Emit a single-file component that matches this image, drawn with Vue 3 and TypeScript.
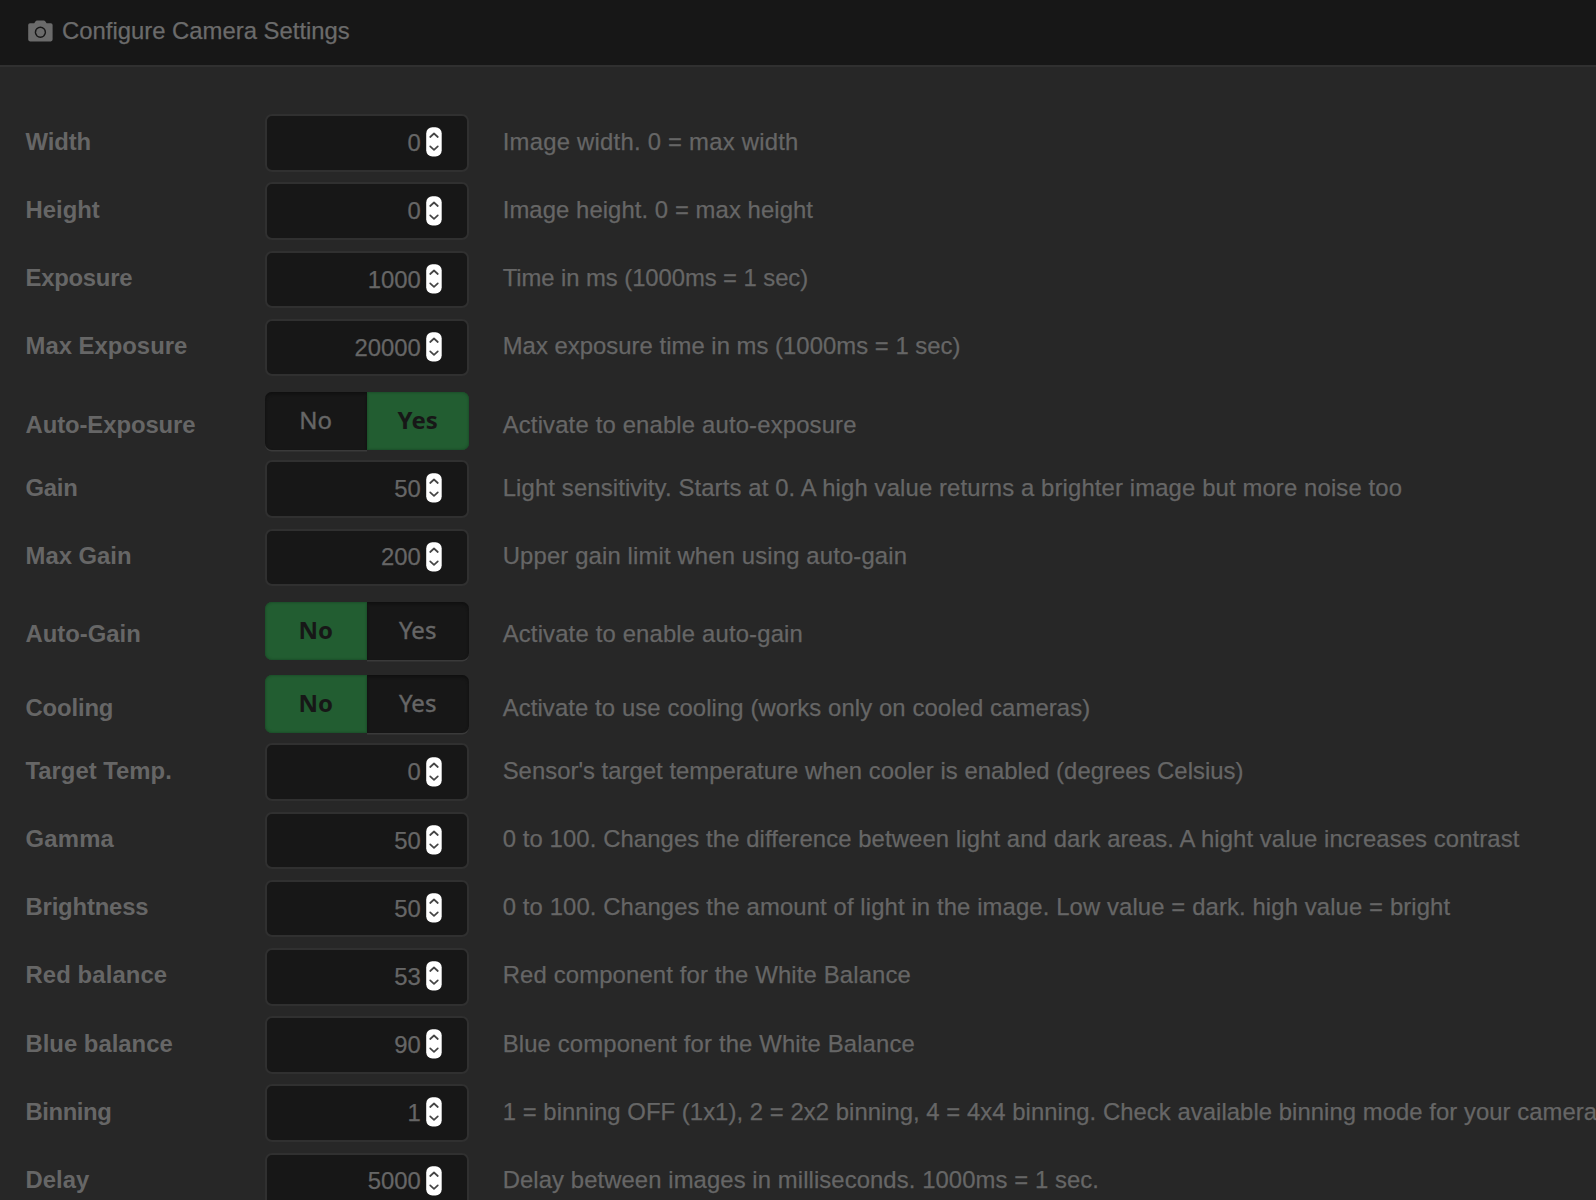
<script setup lang="ts">
interface Setting {
  label: string
  kind: 'number' | 'toggle'
  value: string
  help: string
  // letter-spacing in px: [label, help]
  track: [number, number]
}

const settings: Setting[] = [
  { label: 'Width', kind: 'number', value: '0', help: 'Image width. 0 = max width', track: [-0.1, 0.235] },
  { label: 'Height', kind: 'number', value: '0', help: 'Image height. 0 = max height', track: [0, 0.07] },
  { label: 'Exposure', kind: 'number', value: '1000', help: 'Time in ms (1000ms = 1 sec)', track: [-0.25, -0.075] },
  { label: 'Max Exposure', kind: 'number', value: '20000', help: 'Max exposure time in ms (1000ms = 1 sec)', track: [0, 0.025] },
  { label: 'Auto-Exposure', kind: 'toggle', value: 'Yes', help: 'Activate to enable auto-exposure', track: [-0.08, 0.16] },
  { label: 'Gain', kind: 'number', value: '50', help: 'Light sensitivity. Starts at 0. A high value returns a brighter image but more noise too', track: [-0.25, 0.128] },
  { label: 'Max Gain', kind: 'number', value: '200', help: 'Upper gain limit when using auto-gain', track: [0, 0.14] },
  { label: 'Auto-Gain', kind: 'toggle', value: 'No', help: 'Activate to enable auto-gain', track: [0, 0.16] },
  { label: 'Cooling', kind: 'toggle', value: 'No', help: 'Activate to use cooling (works only on cooled cameras)', track: [-0.15, 0.1] },
  { label: 'Target Temp.', kind: 'number', value: '0', help: "Sensor's target temperature when cooler is enabled (degrees Celsius)", track: [0, 0.022] },
  { label: 'Gamma', kind: 'number', value: '50', help: '0 to 100. Changes the difference between light and dark areas. A hight value increases contrast', track: [0.2, 0.096] },
  { label: 'Brightness', kind: 'number', value: '50', help: '0 to 100. Changes the amount of light in the image. Low value = dark. high value = bright', track: [-0.18, 0.11] },
  { label: 'Red balance', kind: 'number', value: '53', help: 'Red component for the White Balance', track: [0.1, 0.145] },
  { label: 'Blue balance', kind: 'number', value: '90', help: 'Blue component for the White Balance', track: [0, 0.14] },
  { label: 'Binning', kind: 'number', value: '1', help: '1 = binning OFF (1x1), 2 = 2x2 binning, 4 = 4x4 binning. Check available binning mode for your camera', track: [-0.43, 0.048] },
  { label: 'Delay', kind: 'number', value: '5000', help: 'Delay between images in milliseconds. 1000ms = 1 sec.', track: [0, 0.08] },
]
const options = ['No', 'Yes']
</script>

<template>
  <main class="panel">
    <header class="heading">
      <svg class="camera" viewBox="0 0 25 22" width="25" height="22">
        <path fill="#6b6b6b" fill-rule="evenodd" d="M2 3.3H6.2L7.6 1.2Q8.1.4 9 .4H15.8Q16.7.4 17.2 1.2L18.6 3.3H22.8Q24.6 3.3 24.6 5.1V19.6Q24.6 21.4 22.8 21.4H2Q.2 21.4.2 19.6V5.1Q.2 3.3 2 3.3ZM12.4 6.6a5.7 5.7 0 1 0 0 11.4a5.7 5.7 0 1 0 0-11.4Z" />
        <circle cx="12.4" cy="12.3" r="4.2" fill="#6b6b6b" />
      </svg>
      <span>Configure Camera Settings</span>
    </header>
    <section class="rows">
      <div v-for="s in settings" :key="s.label" class="row" :class="s.kind">
        <label class="label" :style="{ letterSpacing: s.track[0] + 'px' }">{{ s.label }}</label>
        <div v-if="s.kind === 'number'" class="field">
          <span class="value">{{ s.value }}</span>
          <svg class="stepper" viewBox="0 0 16 30" width="16" height="30">
            <rect x="0.2" y="0.3" width="15.5" height="29.2" rx="6.2" fill="#fff" />
            <path d="M4.2 10L8 6.5L11.8 10M4.2 19.4L8 22.9L11.8 19.4" fill="none" stroke="#444" stroke-width="1.7" stroke-linecap="round" stroke-linejoin="round" />
          </svg>
        </div>
        <div v-else class="switch">
          <span v-for="o in options" :key="o" class="option" :class="{ on: o === s.value }">{{ o }}</span>
        </div>
        <p class="help" :style="{ letterSpacing: s.track[1] + 'px' }">{{ s.help }}</p>
      </div>
    </section>
  </main>
</template>

<style>
body {
  background: #272727;
  overflow: hidden;
}
</style>

<style scoped>
.panel {
  width: 100%;
  height: 1200px;
  overflow: hidden;
  box-sizing: border-box;
  background: #272727;
  color: #666;
  font: 23.87px/34px "Liberation Sans", Arial, sans-serif;
  -webkit-text-stroke: 0.25px currentColor;
}
.heading {
  display: flex;
  align-items: flex-start;
  height: 51px;
  padding: 14px 0 0 28px;
  background: #171717;
  border-bottom: 2px solid #303030;
  color: #6b6b6b;
}
.camera {
  margin: 6px 9px 0 0;
}
.rows {
  padding-top: 47.3px;
}
.row {
  display: flex;
  align-items: flex-start;
  height: 68.2px;
}
.row.toggle {
  height: 73.35px;
}
.label {
  flex: none;
  width: 239px;
  box-sizing: border-box;
  padding: 10.3px 0 0 25.5px;
  font-weight: bold;
  -webkit-text-stroke: 0;
}
.help {
  margin: 0 0 0 34px;
  padding-top: 10.3px;
  white-space: nowrap;
}
.toggle .label,
.toggle .help {
  padding-top: 20.6px;
}
.field,
.switch {
  flex: none;
  display: flex;
  width: 204px;
  margin-left: 25.7px;
}
.field {
  align-items: flex-start;
  justify-content: flex-end;
  height: 57.5px;
  box-sizing: border-box;
  border: 2px solid #303030;
  border-radius: 7px;
  background: #171717;
  padding: 9.9px 24.8px 0 0;
}
.stepper {
  margin: 1.2px 0 0 5px;
}
.switch {
  height: 58px;
  margin-top: 5px;
  font-family: "Noto Sans", "Open Sans", sans-serif;
  font-size: 24px;
}
.option {
  flex: 1;
  height: 58px;
  line-height: 56.4px;
  text-align: center;
  background: #171717;
  box-shadow: inset 0 2px 3px #101010, 0 1.5px 0 #3a3a3a;
  -webkit-text-stroke: 0.4px currentColor;
}
.option:first-child {
  border-radius: 7px 0 0 7px;
}
.option:last-child {
  border-radius: 0 7px 7px 0;
}
.option.on {
  background: #225d31;
  color: #171717;
  font-weight: bold;
  box-shadow: inset 0 0 2px 1px #1b4f29;
  -webkit-text-stroke: 0;
}
</style>
